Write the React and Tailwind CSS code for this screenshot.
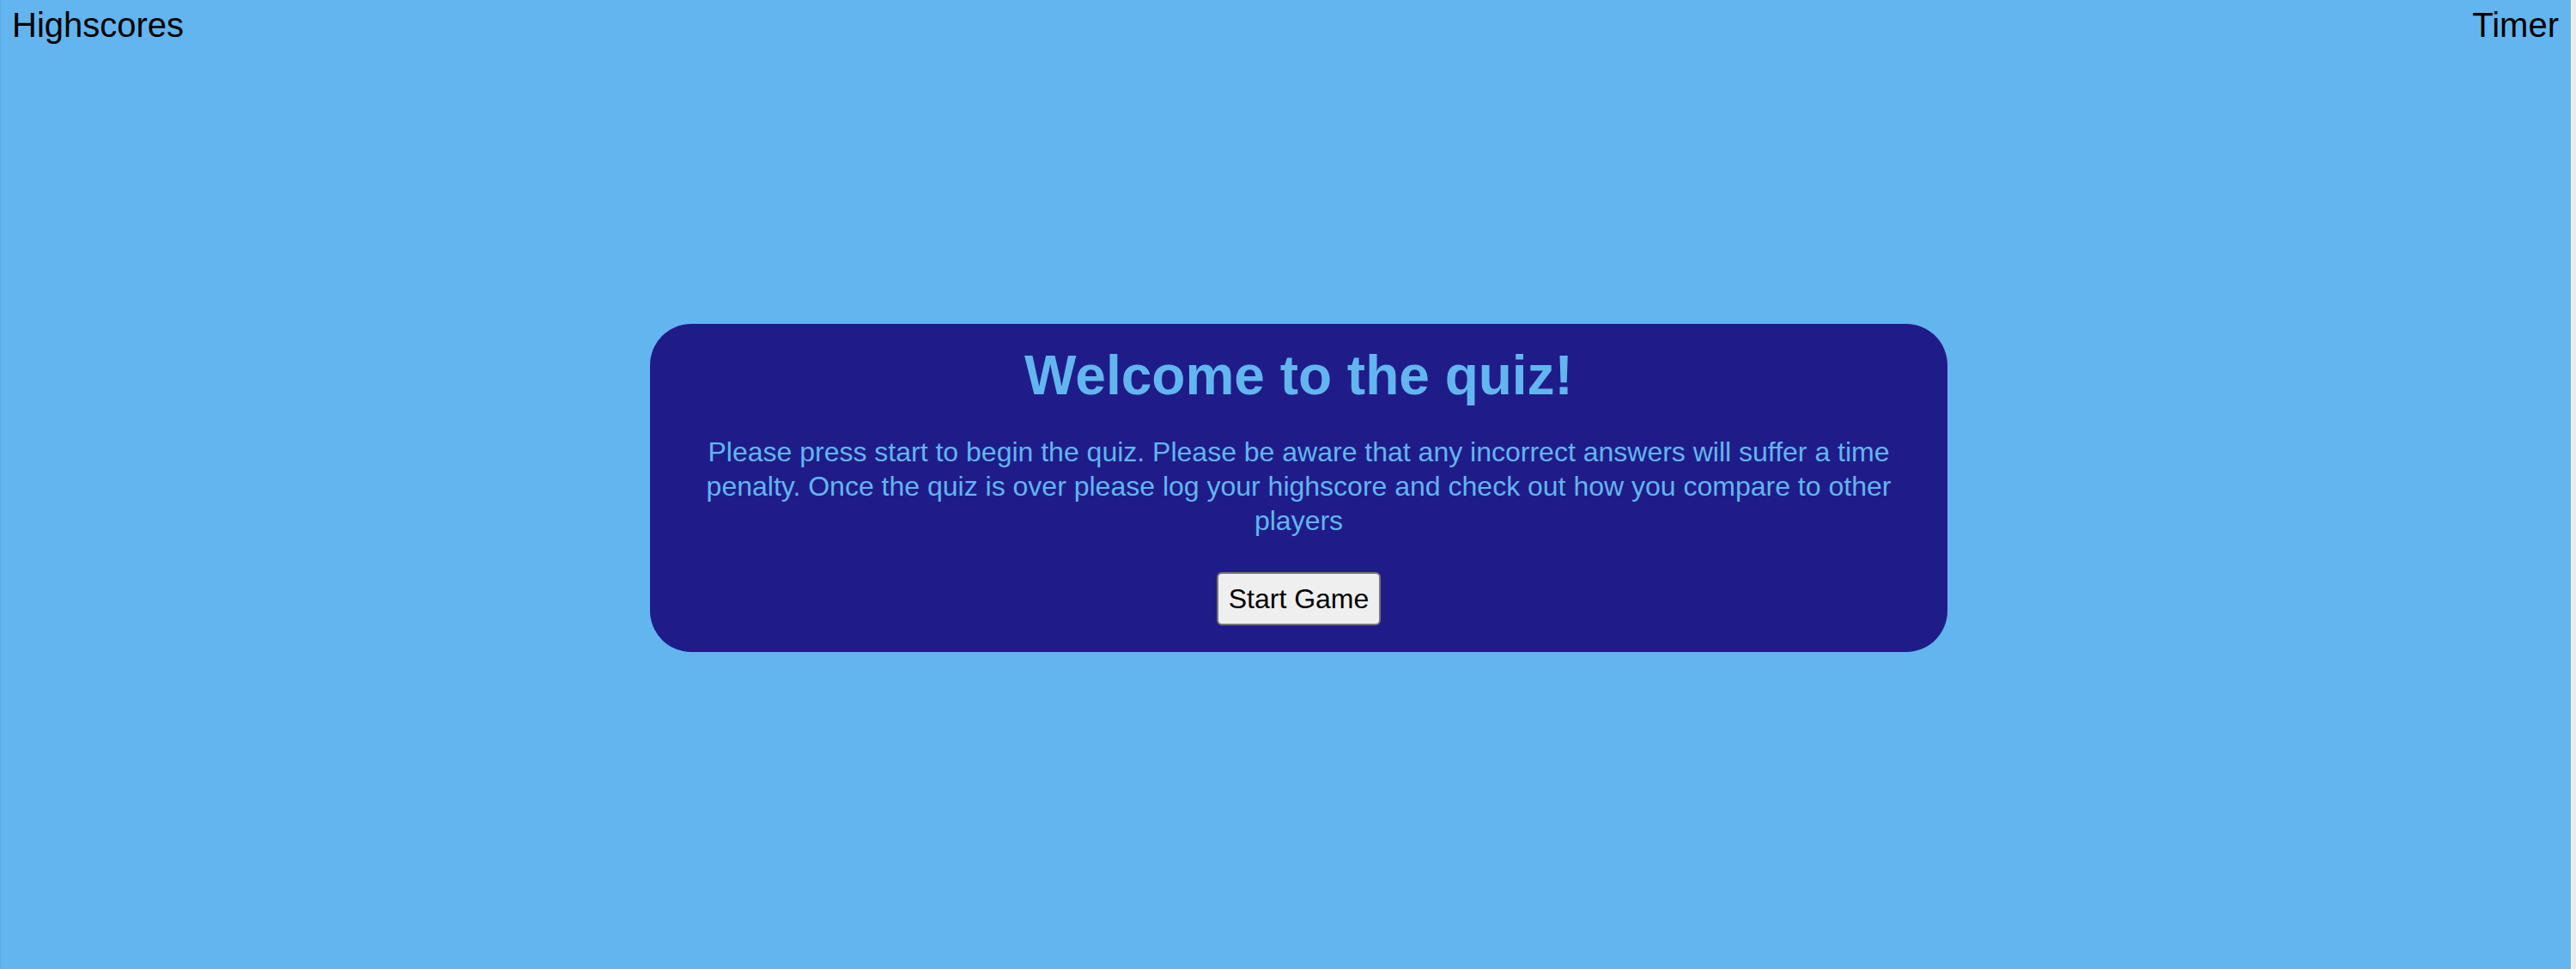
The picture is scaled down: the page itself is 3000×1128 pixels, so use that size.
import React from "react";

const font = "font-['Liberation_Sans',Arial,Helvetica,sans-serif]";

const Header = () => (
  <div className="flex justify-between pt-[6px] pl-[13px] pr-[14px] text-[40px] leading-[46px] text-black">
    <a href="#">Highscores</a>
    <span>Timer</span>
  </div>
);

const Intro = ({ onStart }) => (
  <section className="ml-[756px] mt-[325px] w-[1511px] h-[382px] rounded-[48px] bg-[#1f1c8a] pt-[24px] flex flex-col items-center text-[#63b5ef]">
    <h1 className="text-[64px] leading-[73px] font-bold">Welcome to the quiz!</h1>
    <p className="mt-[32px] px-[48px] text-center text-[32px] leading-[40px]">
      Please press start to begin the quiz. Please be aware that any incorrect answers will suffer a
      time penalty. Once the quiz is over please log your highscore and check out how you compare to
      other players
    </p>
    <button
      onClick={onStart}
      className="mt-[40px] h-[62px] px-[12px] rounded-[6px] border-2 border-[#767676] bg-[#efefef] text-[32px] leading-[37px] text-black"
    >
      Start Game
    </button>
  </section>
);

export default function App() {
  return (
    <div className={`${font} flex h-[1128px] w-[3000px] overflow-hidden bg-[#63b5ef]`}>
      <main className="flex-1 border-l border-[#5aaae4]">
        <Header />
        <Intro onStart={() => {}} />
      </main>
      <div className="w-[6px] border-l border-[#fafafa] bg-[#ececec]" />
    </div>
  );
}
